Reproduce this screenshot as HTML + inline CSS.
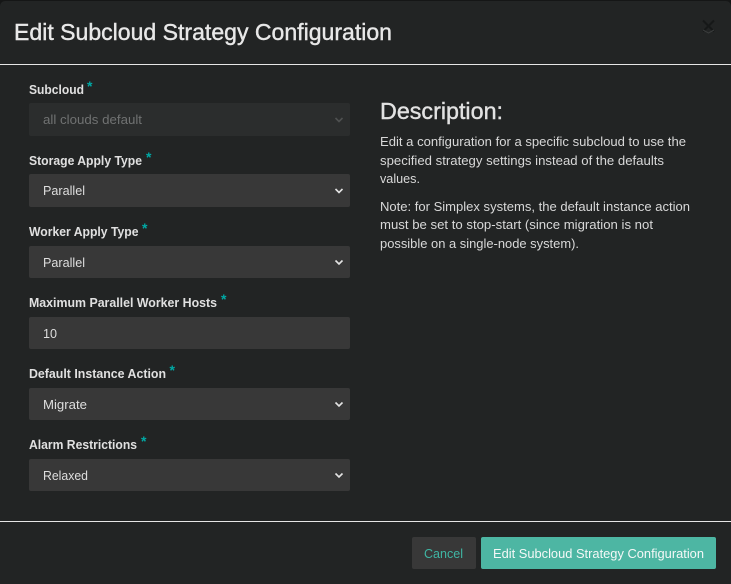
<!DOCTYPE html>
<html lang="en">
<head>
<meta charset="utf-8">
<title>Edit Subcloud Strategy Configuration</title>
<style>
html,body{margin:0;padding:0;width:731px;height:584px;overflow:hidden;background:#151616}
svg{display:block;position:absolute;left:0;top:0}
text{font-family:"Liberation Sans",Arial,sans-serif;white-space:pre}
.l{font-size:12.5px;font-weight:bold;fill:#e0e0e0}
.v{font-size:13px;fill:#dedede}
.d{font-size:12.5px;fill:#d8d8d8}
.a{font-size:14px;font-weight:bold;fill:#00a9a5}
.c{fill:none;stroke:#e4e4e4;stroke-width:1.6}
.h{stroke:currentColor;stroke-width:.4px}
</style>
</head>
<body>
<svg width="731" height="584" viewBox="0 0 731 584" xmlns="http://www.w3.org/2000/svg">
  <rect x="0" y="1" width="731" height="590" rx="5" fill="#222424"/>
  <rect x="0" y="64" width="731" height="1" fill="#e6e6e6"/>
  <rect x="0" y="521" width="731" height="1" fill="#e6e6e6"/>

  <text class="h" x="14" y="40" font-size="23" fill="#e8e8e8" color="#e8e8e8" textLength="378" lengthAdjust="spacingAndGlyphs">Edit Subcloud Strategy Configuration</text>
  <path d="M703 20.500L714 31.500M714 20.500L703 31.500" stroke="#0f1010" stroke-width="2" opacity=".6" fill="none"/>
  <path d="M703 30L708.500 33L714 30" stroke="#3a3c3c" stroke-width="1" fill="none"/>

  <text class="l" x="29" y="94" textLength="55" lengthAdjust="spacingAndGlyphs">Subcloud</text>
  <text class="a" x="87" y="91">*</text>
  <rect x="29" y="103" width="321" height="33" rx="2" fill="#2b2d2d"/>
  <text class="v" x="43" y="124" style="fill:#707272" textLength="99" lengthAdjust="spacingAndGlyphs">all clouds default</text>
  <path d="M335.500 118L339 121.500L342.500 118" class="c" style="stroke:#4f5151"/>

  <text class="l" x="29" y="165" textLength="113" lengthAdjust="spacingAndGlyphs">Storage Apply Type</text>
  <text class="a" x="146" y="162">*</text>
  <rect x="29" y="174" width="321" height="33" rx="2" fill="#383838"/>
  <text class="v" x="43" y="195" textLength="42" lengthAdjust="spacingAndGlyphs">Parallel</text>
  <path d="M335.500 189L339 192.500L342.500 189" class="c"/>

  <text class="l" x="29" y="236" textLength="109.500" lengthAdjust="spacingAndGlyphs">Worker Apply Type</text>
  <text class="a" x="142" y="233">*</text>
  <rect x="29" y="246" width="321" height="32" rx="2" fill="#383838"/>
  <text class="v" x="43" y="267" textLength="42" lengthAdjust="spacingAndGlyphs">Parallel</text>
  <path d="M335.500 260.500L339 264L342.500 260.500" class="c"/>

  <text class="l" x="29" y="307" textLength="188" lengthAdjust="spacingAndGlyphs">Maximum Parallel Worker Hosts</text>
  <text class="a" x="221" y="304">*</text>
  <rect x="29" y="317" width="321" height="32" rx="2" fill="#383838"/>
  <text class="v" x="43" y="338" textLength="14" lengthAdjust="spacingAndGlyphs">10</text>

  <text class="l" x="29" y="378" textLength="137" lengthAdjust="spacingAndGlyphs">Default Instance Action</text>
  <text class="a" x="169.500" y="375">*</text>
  <rect x="29" y="388" width="321" height="32" rx="2" fill="#383838"/>
  <text class="v" x="43" y="409" textLength="44" lengthAdjust="spacingAndGlyphs">Migrate</text>
  <path d="M335.500 402.500L339 406L342.500 402.500" class="c"/>

  <text class="l" x="29" y="449" textLength="108" lengthAdjust="spacingAndGlyphs">Alarm Restrictions</text>
  <text class="a" x="141" y="446">*</text>
  <rect x="29" y="459" width="321" height="32" rx="2" fill="#383838"/>
  <text class="v" x="43" y="480" textLength="45" lengthAdjust="spacingAndGlyphs">Relaxed</text>
  <path d="M335.500 473.500L339 477L342.500 473.500" class="c"/>

  <text class="h" x="380" y="119" font-size="23.500" fill="#e2e2e2" color="#e2e2e2" textLength="123" lengthAdjust="spacingAndGlyphs">Description:</text>
  <text class="d" x="380" y="146" textLength="306" lengthAdjust="spacingAndGlyphs">Edit a configuration for a specific subcloud to use the</text>
  <text class="d" x="380" y="165" textLength="284" lengthAdjust="spacingAndGlyphs">specified strategy settings instead of the defaults</text>
  <text class="d" x="380" y="183" textLength="40" lengthAdjust="spacingAndGlyphs">values.</text>
  <text class="d" x="380" y="211" textLength="310" lengthAdjust="spacingAndGlyphs">Note: for Simplex systems, the default instance action</text>
  <text class="d" x="380" y="229" textLength="273" lengthAdjust="spacingAndGlyphs">must be set to stop-start (since migration is not</text>
  <text class="d" x="380" y="248" textLength="199" lengthAdjust="spacingAndGlyphs">possible on a single-node system).</text>

  <rect x="412" y="537" width="64" height="32" rx="2" fill="#383838"/>
  <text x="424" y="558" font-size="13" fill="#3fb5a3" textLength="39" lengthAdjust="spacingAndGlyphs">Cancel</text>
  <rect x="481" y="537" width="235" height="32" rx="2" fill="#4db6a3"/>
  <text x="493" y="558" font-size="13" fill="#f4f8f7" textLength="211" lengthAdjust="spacingAndGlyphs">Edit Subcloud Strategy Configuration</text>
</svg>
</body>
</html>
